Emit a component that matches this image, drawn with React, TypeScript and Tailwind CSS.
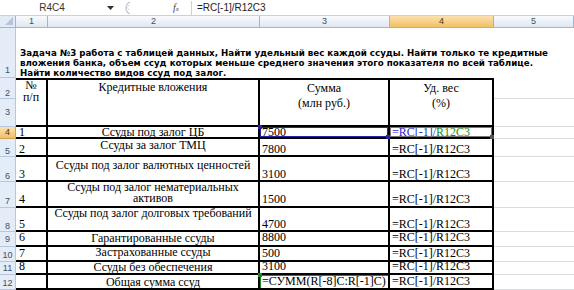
import React from 'react';

type Row = {
  n: string;
  num: string;
  name: string[];
  sum: string;
  lp: string;
  tp: string;
};

const rows: Row[] = [
  { n: '5', num: '2', name: ['Ссуды за залог ТМЦ'], sum: '7800', lp: 'pb-0', tp: 'pt-[1px]' },
  { n: '6', num: '3', name: ['Ссуды под залог валютных ценностей'], sum: '3100', lp: 'pb-0', tp: 'pt-[3px]' },
  { n: '7', num: '4', name: ['Ссуды под залог нематериальных', 'активов'], sum: '1500', lp: 'pb-[1px]', tp: 'pt-0' },
  { n: '8', num: '5', name: ['Ссуды под залог долговых требований'], sum: '4700', lp: 'pb-0', tp: 'pt-0' },
  { n: '9', num: '6', name: ['Гарантированные ссуды'], sum: '8800', lp: 'pb-[2px]', tp: 'pt-[1px]' },
  { n: '10', num: '7', name: ['Застрахованные ссуды'], sum: '500', lp: 'pb-[1px]', tp: 'pt-0' },
  { n: '11', num: '8', name: ['Ссуды без обеспечения'], sum: '3100', lp: 'pb-[1px]', tp: 'pt-0' },
];

const serif = "font-['Liberation_Serif',serif] text-[12px] text-black";
const rowHead = "flex justify-center items-end bg-[#e4ecf7] border-b border-r border-[#b7c8de] font-['Liberation_Sans',sans-serif] text-[9px] leading-[10px] text-[#3a506e]";
const thick = 'border-r-2 border-b-2 border-black';
const light = 'border-b border-[#dadcdd]';

const FormulaText = ({ active }: { active?: boolean }) =>
  active ? (
    <span>
      <span className="text-[#2a2ad0]">=RC[-1]/</span>
      <span className="text-[#1c8a1c]">R12C3</span>
    </span>
  ) : (
    <span>=RC[-1]/R12C3</span>
  );

const ColHead = ({ label, selected }: { label: string; selected?: boolean }) => (
  <div
    className={
      "flex items-center justify-center border-r border-b border-[#9eb6ce] font-['Liberation_Sans',sans-serif] text-[9px] " +
      (selected
        ? 'bg-gradient-to-b from-[#fbe1ad] to-[#f2c064] text-[#4b3a18]'
        : 'bg-gradient-to-b from-[#f9fbfd] to-[#dfe7f1] text-[#3c4f69]')
    }
  >
    {label}
  </div>
);

export default function App() {
  return (
    <div className="w-[574px] h-[290px] overflow-hidden bg-white relative">
      {/* formula bar */}
      <div className="h-[16px] flex items-center border-b border-[#c4d2e4] bg-white font-['Liberation_Sans',sans-serif] text-[10px] text-[#222]">
        <div className="w-[104px] h-[13px] flex items-center justify-center text-[#333]">R4C4</div>
        <div className="w-[12px] flex justify-center">
          <svg width="7" height="4" viewBox="0 0 7 4">
            <path d="M0 0 H7 L3.5 4 Z" fill="#333" />
          </svg>
        </div>
        <svg width="14" height="14" viewBox="0 0 14 14" className="ml-[1px]">
          <path d="M13 1 A6.5 6.5 0 0 0 13 13" fill="none" stroke="#b9c6d6" strokeWidth="1.2" />
          <path d="M12 4 A3 3 0 0 0 12 9" fill="none" stroke="#d5dde8" strokeWidth="1" />
        </svg>
        <div className="w-[42px]" />
        <div className="w-[18px] italic font-['Liberation_Serif',serif] text-[10px] text-[#444]">
          f<span className="text-[7px]">x</span>
        </div>
        <div className="flex-1 h-[14px] flex items-center pl-[5px] border-l border-[#c4d2e4]">=RC[-1]/R12C3</div>
      </div>

      {/* sheet */}
      <div className="grid grid-cols-[16px_32px_212px_130px_104px_80px] grid-rows-[12px_50px_21px_28px_12px_18px_25px_26px_24px_15px_15px_13px_15px]">
        {/* column headers */}
        <div className="relative bg-[#e3ebf5] border-r border-b border-[#9eb6ce]">
          <svg width="8" height="8" viewBox="0 0 8 8" className="absolute right-[2px] bottom-[2px]">
            <path d="M8 0 V8 H0 Z" fill="#b5c4d8" />
          </svg>
        </div>
        <ColHead label="1" />
        <ColHead label="2" />
        <ColHead label="3" />
        <ColHead label="4" selected />
        <ColHead label="5" />

        {/* row 1 */}
        <div className={rowHead + ' pb-[2px]'}>1</div>
        <div className="col-span-5 flex flex-col justify-end pl-[4px] pb-0 font-['DejaVu_Sans',sans-serif] font-bold text-[8.7px] leading-[10px] text-black whitespace-nowrap">
          <div>Задача №3 работа с таблицей данных, Найти удельный вес каждой ссуды. Найти только те кредитные</div>
          <div>вложения банка, объем ссуд которых меньше среднего значения этого показателя по всей таблице.</div>
          <div>Найти количество видов ссуд под залог.</div>
        </div>

        {/* rows 2-3 header */}
        <div className={rowHead + ' pb-0'}>2</div>
        <div className={'row-span-2 border-t-2 text-center ' + thick + ' ' + serif}>
          <div className="leading-[11px]">№</div>
          <div className="leading-[12px]">п/п</div>
        </div>
        <div className={'row-span-2 border-t-2 text-center pt-[1px] leading-[12px] ' + thick + ' ' + serif}>Кредитные вложения</div>
        <div className={'row-span-2 border-t-2 text-center ' + thick + ' ' + serif}>
          <div className="leading-[15px] pt-[1px]">Сумма</div>
          <div className="leading-[15px]">(млн руб.)</div>
        </div>
        <div className={'row-span-2 border-t-2 text-center ' + thick + ' ' + serif}>
          <div className="leading-[15px] pt-[1px]">Уд. вес</div>
          <div className="leading-[15px]">(%)</div>
        </div>
        <div className={light} />
        <div className={rowHead + ' pb-[9px]'}>3</div>
        <div className={light} />

        {/* row 4 (active) */}
        <div className="flex justify-center items-end pb-[1px] bg-gradient-to-b from-[#fbe1ad] to-[#f2c064] border-b border-r border-[#c9a25a] font-['Liberation_Sans',sans-serif] text-[9px] leading-[10px] text-[#4b3a18]">4</div>
        <div className={'flex items-end pl-[3px] leading-[10px] ' + thick + ' ' + serif}>1</div>
        <div className={'text-center leading-[10px] ' + thick + ' ' + serif}>Ссуды под залог ЦБ</div>
        <div className={'relative flex items-end pl-[2px] leading-[10px] ' + thick + ' ' + serif}>
          <span>7500</span>
          <div className="absolute inset-0 border-[1.5px] border-[#2323a8]" />
          <div className="absolute left-[-2px] top-[-2px] w-[4px] h-[4px] bg-[#2323a8]" />
          <div className="absolute right-[-2px] bottom-[-2px] w-[4px] h-[4px] bg-[#2323a8]" />
        </div>
        <div className={'relative flex items-end pl-[2px] leading-[10px] ' + thick + ' ' + serif}>
          <FormulaText active />
          <div className="absolute inset-0 border border-[#777]" />
          <div className="absolute right-[-2px] bottom-[-2px] w-[4px] h-[4px] bg-[#555]" />
        </div>
        <div className={light} />

        {rows.map((r) => (
          <React.Fragment key={r.n}>
            <div className={rowHead + ' ' + r.lp}>{r.n}</div>
            <div className={'flex items-end pl-[3px] leading-[12px] ' + r.lp + ' ' + thick + ' ' + serif}>{r.num}</div>
            <div className={'text-center ' + r.tp + ' ' + thick + ' ' + serif}>
              {r.name.map((l) => (
                <div key={l} className="leading-[11px]">{l}</div>
              ))}
            </div>
            <div className={'flex items-end pl-[2px] leading-[12px] ' + r.lp + ' ' + thick + ' ' + serif}>{r.sum}</div>
            <div className={'flex items-end pl-[2px] leading-[12px] ' + r.lp + ' ' + thick + ' ' + serif}>
              <FormulaText />
            </div>
            <div className={light} />
          </React.Fragment>
        ))}

        {/* row 12 */}
        <div className={rowHead + ' pb-[1px]'}>12</div>
        <div className={thick + ' ' + serif} />
        <div className={'text-center pt-[1px] leading-[12px] ' + thick + ' ' + serif}>Общая сумма ссуд</div>
        <div className={'relative flex items-end pl-[2px] pb-[1px] leading-[12px] ' + thick + ' ' + serif}>
          <span>=СУММ(R[-8]C:R[-1]C)</span>
          <div className="absolute inset-0 border-l-[1.5px] border-t-[1.5px] border-[#1c8a1c]" />
          <div className="absolute left-[-2px] top-[-2px] w-[4px] h-[4px] bg-[#1c8a1c]" />
        </div>
        <div className={'flex items-end pl-[2px] pb-[1px] leading-[12px] ' + thick + ' ' + serif}>
          <FormulaText />
        </div>
        <div className={light} />
      </div>
    </div>
  );
}
